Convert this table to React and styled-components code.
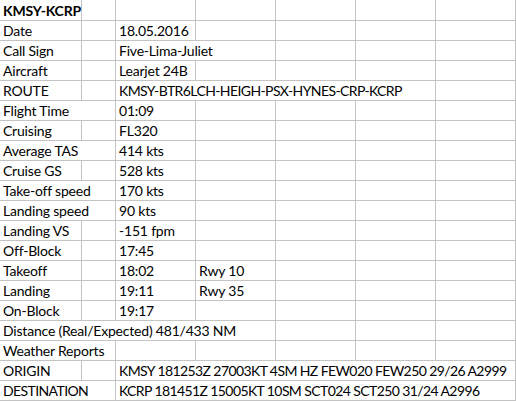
import React from 'react';
import styled, { createGlobalStyle } from 'styled-components';

const GlobalStyle = createGlobalStyle`
  html, body {
    margin: 0;
    padding: 0;
    background: #ffffff;
  }
`;

// column widths include the 1px grid line on the right
const COLUMNS = [82, 34, 80, 80, 80, 80, 80];

const rows = [
  [{ text: 'KMSY-KCRP', bold: true }, {}, {}, {}, {}, {}, {}],
  [{ text: 'Date' }, {}, { text: '18.05.2016' }, {}, {}, {}, {}],
  [{ text: 'Call Sign' }, {}, { text: 'Five-Lima-Juliet', span: 2 }, {}, {}, {}],
  [{ text: 'Aircraft' }, {}, { text: 'Learjet 24B' }, {}, {}, {}, {}],
  [{ text: 'ROUTE' }, {}, { text: 'KMSY-BTR6LCH-HEIGH-PSX-HYNES-CRP-KCRP', span: 4, caps: true }, {}],
  [{ text: 'Flight Time', span: 2 }, { text: '01:09' }, {}, {}, {}, {}],
  [{ text: 'Cruising' }, {}, { text: 'FL320' }, {}, {}, {}, {}],
  [{ text: 'Average TAS', span: 2 }, { text: '414 kts' }, {}, {}, {}, {}],
  [{ text: 'Cruise GS' }, {}, { text: '528 kts' }, {}, {}, {}, {}],
  [{ text: 'Take-off speed', span: 2 }, { text: '170 kts' }, {}, {}, {}, {}],
  [{ text: 'Landing speed', span: 2 }, { text: '90 kts' }, {}, {}, {}, {}],
  [{ text: 'Landing VS' }, {}, { text: '-151 fpm' }, {}, {}, {}, {}],
  [{ text: 'Off-Block' }, {}, { text: '17:45' }, {}, {}, {}, {}],
  [{ text: 'Takeoff' }, {}, { text: '18:02' }, { text: 'Rwy 10' }, {}, {}, {}],
  [{ text: 'Landing' }, {}, { text: '19:11' }, { text: 'Rwy 35' }, {}, {}, {}],
  [{ text: 'On-Block' }, {}, { text: '19:17' }, {}, {}, {}, {}],
  [{ text: 'Distance (Real/Expected) 481/433 NM', span: 4 }, {}, {}, {}],
  [{ text: 'Weather Reports', span: 2 }, {}, {}, {}, {}, {}],
  [{ text: 'ORIGIN' }, {}, { text: 'KMSY 181253Z 27003KT 4SM HZ FEW020 FEW250 29/26 A2999', span: 5, caps: true }],
  [{ text: 'DESTINATION', span: 2, caps: true }, { text: 'KCRP 181451Z 15005KT 10SM SCT024 SCT250 31/24 A2996', span: 5, caps: true }],
];

export default function App() {
  return (
    <>
      <GlobalStyle />
      <Sheet>
        {rows.map((row, r) =>
          row.map((cell, c) => (
            <Cell
              key={`${r}-${c}`}
              $span={cell.span || 1}
              $bold={cell.bold}
              $caps={cell.caps}
              $first={r === 0}
            >
              {cell.text}
            </Cell>
          ))
        )}
      </Sheet>
    </>
  );
}

const Sheet = styled.div`
  display: grid;
  grid-template-columns: ${COLUMNS.map((w) => `${w}px`).join(' ')};
  width: 516px;
  overflow: hidden;
  font-family: Lato, 'Liberation Sans', sans-serif;
  font-size: 14px;
  color: #000000;
`;

const Cell = styled.div`
  grid-column: span ${(p) => p.$span};
  box-sizing: border-box;
  height: ${(p) => (p.$first ? '21px' : '20px')};
  line-height: 19px;
  padding: 0 0 0 3px;
  border-right: 1px solid #c4c4c4;
  border-bottom: 1px solid #c4c4c4;
  white-space: nowrap;
  letter-spacing: ${(p) => (p.$caps ? '-0.6px' : '-0.2px')};
  font-weight: ${(p) => (p.$bold ? 700 : 400)};
  display: flex;
  align-items: flex-end;
`;
